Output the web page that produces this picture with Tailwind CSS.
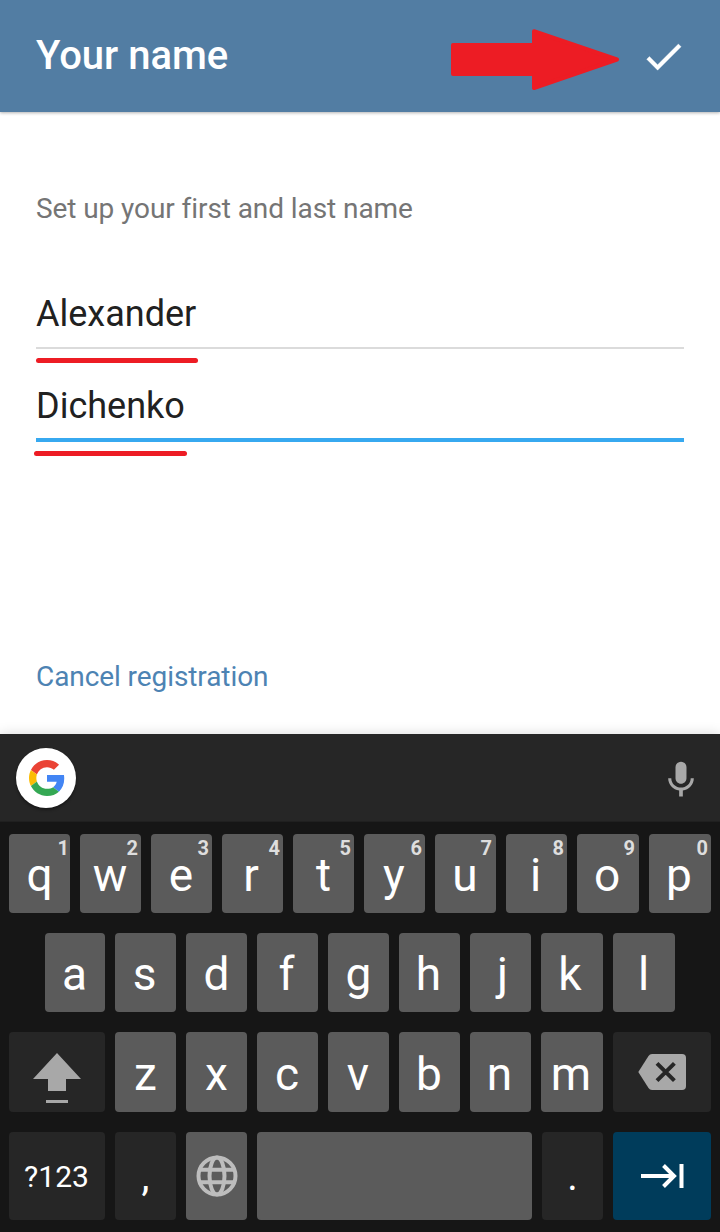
<!DOCTYPE html>
<html lang="en">
<head>
    <meta charset="UTF-8">
    <meta name="viewport" content="width=device-width, initial-scale=1.0">
    <title>Your name</title>
    <script src="https://cdn.jsdelivr.net/npm/@tailwindcss/browser@4"></script>
</head>
<body class="bg-white font-['Roboto',sans-serif]">
    <div class="relative w-[720px] h-[1232px] flex flex-col overflow-hidden">
        <!-- Header -->
        <header class="h-28 shrink-0 bg-[#527da3] flex items-center justify-between pl-9 pr-[33px] shadow-[0_1px_3px_rgba(0,0,0,0.3)]">
            <h1 class="text-white text-[40px] leading-[48px] font-medium">Your name</h1>
            <svg class="w-[47px] h-[47px]" viewBox="0 0 24 24" fill="#fff" stroke="#fff" stroke-width="0.15">
                <path d="M9 16.17L4.83 12l-1.42 1.41L9 19 21 7l-1.41-1.41z"/>
            </svg>
        </header>

        <!-- Form -->
        <main class="h-[622px] shrink-0 px-9 pt-[81px] flex flex-col">
            <p class="text-[#757575] text-[28px] leading-8 tracking-[-0.08px]">Set up your first and last name</p>
            <div class="mt-[67px] h-[57px] border-b-2 border-[#dbdbdb] text-[#212121] text-4xl leading-[44px]">Alexander</div>
            <div class="mt-[35px] h-[58px] border-b-4 border-[#37a9f0] text-[#212121] text-4xl leading-[44px]">Dichenko</div>
            <a href="#" class="mt-[219px] text-[#4d83b3] text-[28px] leading-8 tracking-[-0.08px]">Cancel registration</a>
        </main>

        <!-- Keyboard -->
        <section class="relative h-[498px] shrink-0 bg-[#161616] text-white text-[46px] leading-[82px] shadow-[0_0_12px_rgba(0,0,0,0.15)]">
            <div class="h-[88px] bg-[#262626] border-b border-[#202020] flex items-center justify-between pl-4 pr-[17px]">
                <div class="w-[60px] h-[60px] rounded-full bg-white flex items-center justify-center shadow-[0_2px_3px_rgba(0,0,0,0.4)]">
                    <svg class="w-9 h-9 ml-px" viewBox="0 0 48 48">
                        <path fill="#EA4335" d="M24 9.5c3.54 0 6.71 1.22 9.21 3.6l6.85-6.85C35.9 2.38 30.47 0 24 0 14.62 0 6.51 5.38 2.56 13.22l7.98 6.19C12.43 13.72 17.74 9.5 24 9.5z"/>
                        <path fill="#4285F4" d="M46.98 24.55c0-1.57-.15-3.09-.38-4.55H24v9.02h12.94c-.58 2.96-2.26 5.48-4.78 7.18l7.73 6c4.51-4.18 7.09-10.36 7.09-17.65z"/>
                        <path fill="#FBBC05" d="M10.53 28.59c-.48-1.45-.76-2.99-.76-4.59s.27-3.14.76-4.59l-7.98-6.19C.92 16.46 0 20.12 0 24c0 3.88.92 7.54 2.56 10.78l7.97-6.19z"/>
                        <path fill="#34A853" d="M24 48c6.48 0 11.93-2.13 15.89-5.81l-7.73-6c-2.15 1.45-4.92 2.3-8.16 2.3-6.26 0-11.57-4.22-13.47-9.91l-7.98 6.19C6.51 42.62 14.62 48 24 48z"/>
                    </svg>
                </div>
                <svg class="w-11 h-11 mt-1" viewBox="0 0 24 24" fill="#a8a8a8">
                    <path d="M12 14c1.66 0 2.99-1.34 2.99-3L15 5c0-1.66-1.34-3-3-3S9 3.34 9 5v6c0 1.66 1.34 3 3 3zm5.3-3c0 3-2.54 5.1-5.3 5.1S6.7 14 6.7 11H5c0 3.41 2.72 6.23 6 6.72V21h2v-3.28c3.28-.48 6-3.3 6-6.72h-1.7z"/>
                </svg>
            </div>

            <div class="pt-3 px-[9px] flex flex-col gap-5 text-center">
                <div class="flex gap-2.5 h-[79px]">
                    <div class="relative w-[61px] rounded bg-[#5b5b5b]">q<span class="absolute top-0.5 right-px text-xl leading-6 font-bold text-[#dedede]">1</span></div>
                    <div class="relative w-[61px] rounded bg-[#5b5b5b] pr-px">w<span class="absolute top-0.5 right-[3px] text-xl leading-6 font-bold text-[#dedede]">2</span></div>
                    <div class="relative w-[61px] rounded bg-[#5b5b5b] pr-px">e<span class="absolute top-0.5 right-[3px] text-xl leading-6 font-bold text-[#dedede]">3</span></div>
                    <div class="relative w-[61px] rounded bg-[#5b5b5b] pr-[3px]">r<span class="absolute top-0.5 right-[3px] text-xl leading-6 font-bold text-[#dedede]">4</span></div>
                    <div class="relative w-[61px] rounded bg-[#5b5b5b]">t<span class="absolute top-0.5 right-[3px] text-xl leading-6 font-bold text-[#dedede]">5</span></div>
                    <div class="relative w-[61px] rounded bg-[#5b5b5b] pr-px">y<span class="absolute top-0.5 right-[3px] text-xl leading-6 font-bold text-[#dedede]">6</span></div>
                    <div class="relative w-[61px] rounded bg-[#5b5b5b] pr-px">u<span class="absolute top-0.5 right-1 text-xl leading-6 font-bold text-[#dedede]">7</span></div>
                    <div class="relative w-[61px] rounded bg-[#5b5b5b] pr-0.5">i<span class="absolute top-0.5 right-[3px] text-xl leading-6 font-bold text-[#dedede]">8</span></div>
                    <div class="relative w-[62px] rounded bg-[#5b5b5b] pr-0.5">o<span class="absolute top-0.5 right-1 text-xl leading-6 font-bold text-[#dedede]">9</span></div>
                    <div class="relative w-[62px] rounded bg-[#5b5b5b] pr-0.5">p<span class="absolute top-0.5 right-[3px] text-xl leading-6 font-bold text-[#dedede]">0</span></div>
                </div>
                <div class="flex gap-2.5 h-[79px] px-9">
                    <div class="w-[60px] rounded bg-[#5b5b5b] pr-px">a</div>
                    <div class="w-[61px] rounded bg-[#5b5b5b] pr-0.5">s</div>
                    <div class="w-[61px] rounded bg-[#5b5b5b]">d</div>
                    <div class="w-[61px] rounded bg-[#5b5b5b] pr-0.5">f</div>
                    <div class="w-[61px] rounded bg-[#5b5b5b]">g</div>
                    <div class="w-[61px] rounded bg-[#5b5b5b] pr-0.5">h</div>
                    <div class="w-[61px] rounded bg-[#5b5b5b] pl-1">j</div>
                    <div class="w-[62px] rounded bg-[#5b5b5b] pr-1">k</div>
                    <div class="w-[62px] rounded bg-[#5b5b5b] pr-px">l</div>
                </div>
                <div class="flex gap-2.5 h-20 leading-[84px]">
                    <div class="w-24 rounded bg-[#262626]">
                        <svg class="w-24 h-20" viewBox="0 0 96 80" fill="#a8a8a8">
                            <path d="M48 21l24 26H57v12H39V47H24zM37 68h22v3H37z"/>
                        </svg>
                    </div>
                    <div class="w-[61px] rounded bg-[#5b5b5b]">z</div>
                    <div class="w-[61px] rounded bg-[#5b5b5b]">x</div>
                    <div class="w-[61px] rounded bg-[#5b5b5b] pr-px">c</div>
                    <div class="w-[61px] rounded bg-[#5b5b5b] pr-px">v</div>
                    <div class="w-[61px] rounded bg-[#5b5b5b] pr-px">b</div>
                    <div class="w-[61px] rounded bg-[#5b5b5b] pr-0.5">n</div>
                    <div class="w-[62px] rounded bg-[#5b5b5b] pr-0.5">m</div>
                    <div class="w-[98px] rounded bg-[#262626]">
                        <svg class="w-[98px] h-20" viewBox="0 0 98 80">
                            <path fill="#a8a8a8" d="M25.3 40l10.2-16q1.3-2 3.5-2h30q4 0 4 4v28q0 4-4 4H39q-2.200 0-3.500-2z"/>
                            <path stroke="#262626" stroke-width="4" fill="none" d="M44 31.300l17.400 17.400M61.400 31.300L44 48.700"/>
                        </svg>
                    </div>
                </div>
                <div class="flex gap-2.5 h-[88px]">
                    <div class="w-24 rounded bg-[#262626] text-3xl leading-[89px] pr-px">?123</div>
                    <div class="w-[61px] rounded bg-[#262626] text-[40px] leading-[90px]">,</div>
                    <div class="w-[61px] rounded bg-[#5b5b5b]">
                        <svg class="w-[61px] h-[88px]" viewBox="0 0 61 88" fill="none" stroke="#bdbdbd" stroke-width="4">
                            <circle cx="31" cy="44" r="18.500"/>
                            <ellipse cx="31" cy="44" rx="7.500" ry="18.500"/>
                            <path d="M14 37.700h34M14 50.300h34"/>
                        </svg>
                    </div>
                    <div class="w-[275px] rounded bg-[#5b5b5b]"></div>
                    <div class="w-[61px] rounded bg-[#262626] text-[40px] leading-[90px]">.</div>
                    <div class="w-[98px] rounded bg-[#003c5b]">
                        <svg class="w-[98px] h-[88px]" viewBox="0 0 98 88" fill="none" stroke="#fff" stroke-width="4">
                            <path d="M28 44h33M50.500 33.500L61 44 50.500 54.500M68.500 32v24"/>
                        </svg>
                    </div>
                </div>
            </div>
        </section>

        <!-- Red marks over the form -->
        <svg class="absolute top-7 left-[450px] w-[172px] h-16" viewBox="0 0 172 64">
            <path fill="#ed1c24" stroke="#ed1c24" stroke-width="4" stroke-linejoin="round" d="M3 17h81V3.200l83 28.300L84 60V46H3z"/>
        </svg>
        <div class="absolute top-[358px] left-9 w-[162px] h-[5px] rounded-sm bg-[#ed1c24]"></div>
        <div class="absolute top-[451px] left-[34px] w-[153px] h-[5px] rounded-sm bg-[#ed1c24]"></div>
    </div>
</body>
</html>
